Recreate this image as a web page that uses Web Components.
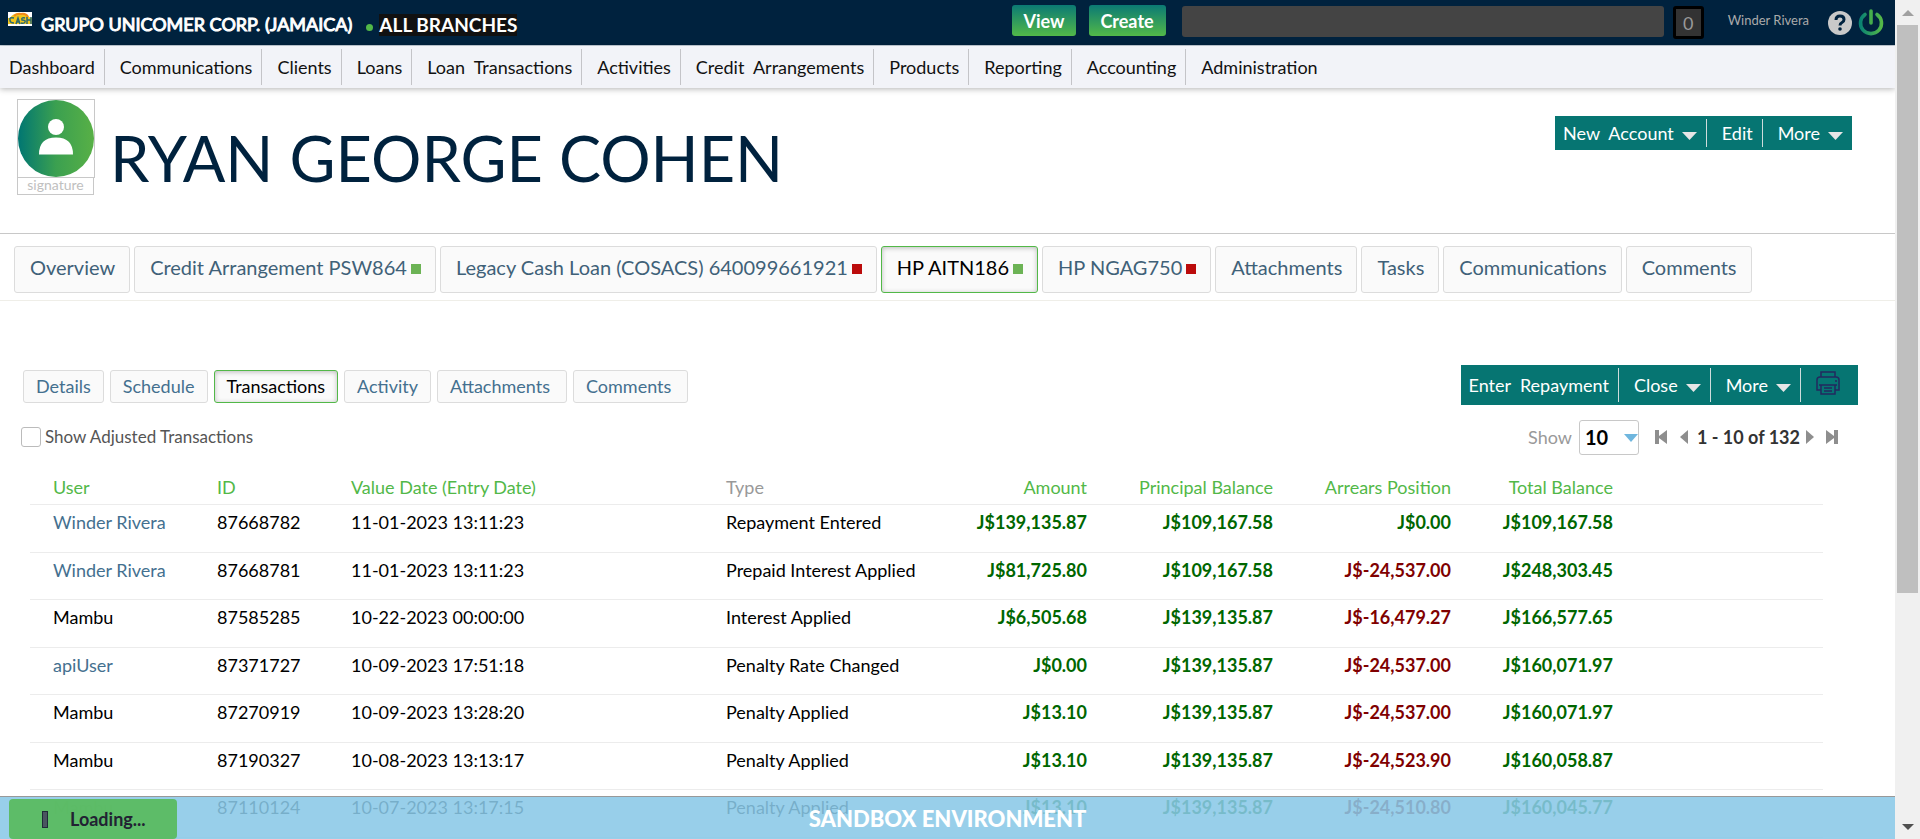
<!DOCTYPE html>
<html lang="en">
<head>
<meta charset="utf-8">
<title>Ryan George Cohen - HP AITN186</title>
<style>
html, body { margin: 0; height: 100%; }
body { font: 18px/22px Lato, "Liberation Sans", sans-serif; color: #000; background: #fff; overflow: hidden; }
</style>
</head>
<body>
<app-shell>
  <top-bar></top-bar>
  <main-nav></main-nav>
  <client-header name="RYAN GEORGE COHEN">
    <action-bar slot="actions">
      <action-item menu>New&nbsp; Account</action-item>
      <action-item>Edit</action-item>
      <action-item menu>More</action-item>
    </action-bar>
  </client-header>
  <tab-strip size="large">
    <tab-item>Overview</tab-item>
    <tab-item state="green">Credit Arrangement PSW864</tab-item>
    <tab-item state="red">Legacy Cash Loan (COSACS) 640099661921</tab-item>
    <tab-item state="green" active>HP AITN186</tab-item>
    <tab-item state="red">HP NGAG750</tab-item>
    <tab-item>Attachments</tab-item>
    <tab-item>Tasks</tab-item>
    <tab-item>Communications</tab-item>
    <tab-item>Comments</tab-item>
  </tab-strip>
  <account-panel>
    <tab-strip slot="tabs">
      <tab-item>Details</tab-item>
      <tab-item>Schedule</tab-item>
      <tab-item active>Transactions</tab-item>
      <tab-item>Activity</tab-item>
      <tab-item roomy>Attachments</tab-item>
      <tab-item roomy>Comments</tab-item>
    </tab-strip>
    <action-bar slot="actions" tall>
      <action-item>Enter&nbsp; Repayment</action-item>
      <action-item menu>Close</action-item>
      <action-item menu>More</action-item>
      <action-item icon="print"></action-item>
    </action-bar>
    <list-controls></list-controls>
    <transactions-table></transactions-table>
  </account-panel>
  <sandbox-banner slot="overlay"></sandbox-banner>
</app-shell>

<script>
function define(name, html, setup) {
  const tpl = document.createElement('template');
  tpl.innerHTML = html;
  customElements.define(name, class extends HTMLElement {
    connectedCallback() {
      if (this.shadowRoot) return;
      const root = this.attachShadow({ mode: 'open' });
      root.append(tpl.content.cloneNode(true));
      if (setup) setup(this, root);
    }
  });
}

define('scroll-rail', `
<style>
  :host { display: flex; flex-direction: column; align-items: center; width: 25px; box-sizing: border-box; background: #f0f0f0; }
  .arrow { display: flex; flex: none; align-items: center; justify-content: center; width: 25px; height: 25px; }
  .track { flex: 1; width: 21px; }
  .thumb { height: 72%; background: #bfbfbf; }
</style>
<div class="arrow"><svg width="12" height="8"><path d="M0 7L6 1L12 7Z" fill="#a0a0a0"/></svg></div>
<div class="track"><div class="thumb"></div></div>
<div class="arrow"><svg width="12" height="8"><path d="M0 1L6 7L12 1Z" fill="#505050"/></svg></div>`);

define('app-shell', `
<style>
  :host { display: flex; height: 100vh; overflow: hidden; }
  .page { position: relative; flex: 1; min-width: 0; overflow: hidden; }
  slot[name=overlay]::slotted(*) { position: absolute; left: 0; right: 0; bottom: 0; }
</style>
<div class="page"><slot></slot><slot name="overlay"></slot></div>
<scroll-rail></scroll-rail>`);

define('top-bar', `
<style>
  :host { display: flex; align-items: flex-start; height: 46px; padding: 0 11px 0 8px; background: #00223e; color: #fff; border-bottom: 1px solid #c9d3dd; box-sizing: border-box; }
  .logo { margin-top: 12px; flex: none; }
  .org { margin: 13px 0 0 9px; -webkit-text-stroke: 1px #fff; white-space: nowrap; }
  .dot { width: 7px; height: 7px; margin: 24px 6px 0 14px; border-radius: 50%; background: #52b848; }
  .branch { margin-top: 14px; background: #111; font-size: 19px; line-height: 22px; font-weight: 700; white-space: nowrap; }
  .right { display: flex; align-items: flex-start; margin-left: auto; }
  button { font: 700 18px/22px Lato, sans-serif; color: #fff; border: 0; cursor: pointer; }
  .cta { height: 31px; margin: 5px 13px 0 0; padding: 0 12px 0 11px; border-radius: 3px; background: linear-gradient(#0b7a74, #52b848); }
  .cta + .cta { margin-right: 16px; }
  input { width: 482px; height: 31px; margin: 6px 9px 0 0; padding: 0 8px; box-sizing: border-box; border: 0; border-radius: 3px; background: #444; color: #fff; font: inherit; }
  .count { width: 31px; height: 33px; margin-top: 6px; box-sizing: border-box; border: 3px solid #000; border-radius: 3px; background: #333; color: #999; text-align: center; line-height: 29px; }
  .user { margin: 9px 19px 0 24px; font-size: 13px; color: #aaa; text-decoration: none; }
  .icon { display: block; padding: 0; background: none; }
  .help { margin-top: 11px; }
  .power { margin: 9px 0 0 6px; }
</style>
<svg class="logo" width="24" height="14" viewBox="0 0 24 14" role="img" aria-label="Courts Ready Cash">
  <rect width="24" height="14" fill="#fff"/>
  <path d="M2 6Q5 1 12 1Q19 1 21 5L24 6V12H0V6Z" fill="#f2c61c"/>
  <path d="M6 4Q9 1 13 2Q18 1 20 5" fill="none" stroke="#f08a1c" stroke-width="2"/>
  <g fill="none" stroke="#2b6a70" stroke-width="1.500"><path d="M6 6Q1 5 2 8Q2 11 6 11"/><path d="M8 12L10 6L12 12M9 10H12"/><path d="M17 6Q13 5 14 8Q18 8 17 10Q16 12 13 11"/><path d="M19 5V12M23 5V12M19 8H23"/></g>
</svg>
<div class="org">GRUPO UNICOMER CORP. (JAMAICA)</div>
<span class="dot"></span>
<div class="branch">ALL BRANCHES</div>
<div class="right">
  <button class="cta">View</button><button class="cta">Create</button>
  <input type="search" aria-label="Search">
  <div class="count">0</div>
  <a class="user" href="#user">Winder Rivera</a>
  <button class="icon help" aria-label="Help"><svg width="24" height="24" viewBox="0 0 24 24" style="display:block"><circle cx="12" cy="12" r="12" fill="#c9c9c9"/><path d="M8 9Q8 5 12 5Q16 5 16 8.500Q16 10.500 14 11.500Q12 12.500 12 14.500" fill="none" stroke="#00223e" stroke-width="3"/><circle cx="12" cy="18" r="1.800" fill="#00223e"/></svg></button>
  <button class="icon power" aria-label="Log out"><svg width="26" height="27" viewBox="0 0 26 27" style="display:block"><defs><linearGradient id="g"><stop stop-color="#0a8372"/><stop offset="1" stop-color="#55b848"/></linearGradient></defs><path d="M7 5.500A10.500 10.500 0 1 0 19 5.500" fill="none" stroke="url(#g)" stroke-width="3.600" stroke-linecap="round"/><path d="M13 2V14" stroke="#45ae4c" stroke-width="3.600" stroke-linecap="round"/></svg></button>
</div>`);

define('main-nav', `
<style>
  :host { display: block; position: relative; background: #f2f3f8; box-shadow: 0 1px 6px rgba(0,0,0,.3); }
  nav { display: flex; height: 42px; padding-top: 3px; box-sizing: border-box; }
  a { height: 36px; padding: 0 9px 0 15px; border-right: 1px solid #c4c4c8; color: #111; text-decoration: none; line-height: 37px; white-space: nowrap; }
  a:first-child { padding-left: 9px; }
  a:last-child { border: 0; }
</style>
<nav aria-label="Main">
  <a href="#1">Dashboard</a><a href="#2">Communications</a><a href="#3">Clients</a><a href="#4">Loans</a><a href="#5">Loan&nbsp; Transactions</a><a href="#6">Activities</a><a href="#7">Credit&nbsp; Arrangements</a><a href="#8">Products</a><a href="#9">Reporting</a><a href="#10">Accounting</a><a href="#11">Administration</a>
</nav>`);

define('client-header', `
<style>
  :host { display: flex; align-items: flex-start; height: 146px; padding: 11px 43px 0 17px; box-sizing: border-box; border-bottom: 1px solid #c8c8c8; }
  figure { margin: 0; width: 78px; flex: none; }
  svg { display: block; border: 1px solid #c8c8c8; }
  figcaption { width: 77px; height: 18px; margin-top: -1px; box-sizing: border-box; border: 1px solid #c8c8c8; color: #c0c0c0; font-size: 14px; line-height: 14px; text-align: center; }
  h1 { margin: 21px 0 0 15px; font-size: 63px; line-height: 76px; font-weight: 400; color: #00223e; white-space: nowrap; }
  slot { display: block; margin: 17px 0 0 auto; }
</style>
<figure>
  <svg width="76" height="77" viewBox="0 0 76 77" role="img" aria-label="Client photo"><defs><linearGradient id="a"><stop stop-color="#007672"/><stop offset=".5" stop-color="#3ba050"/><stop offset="1" stop-color="#58b046"/></linearGradient></defs><ellipse cx="38" cy="38.500" rx="38" ry="38.500" fill="url(#a)"/><circle cx="38" cy="27" r="8" fill="#fff"/><path d="M21 54.500Q21 37.500 38 37.500Q55 37.500 55 54.500Z" fill="#fff"/></svg>
  <figcaption>signature</figcaption>
</figure>
<h1></h1>
<slot name="actions"></slot>`, (el, root) => { root.querySelector('h1').textContent = el.getAttribute('name'); });

define('action-bar', `
<style>
  :host { display: flex; height: 34px; padding: 3px 0; box-sizing: border-box; background: #067572; color: #fff; }
  :host([tall]) { height: 40px; }
</style>
<slot></slot>`);

define('action-item', `
<style>
  :host { display: flex; }
  button { display: flex; align-items: center; gap: 8px; padding: 0 9px 0 15px; border: 0; background: none; color: inherit; font: inherit; white-space: nowrap; cursor: pointer; }
  :host(:first-child) button { padding-left: 8px; }
  :host(:not(:last-child)) button { border-right: 1px solid #cfdcdc; }
  .caret { display: none; margin-top: 6px; }
  :host([menu]) .caret { display: block; }
  .print { display: none; margin-bottom: 4px; }
  :host([icon=print]) button { padding: 0 18px 0 15px; }
  :host([icon=print]) .print { display: block; }
  :host([icon=print]) slot { display: none; }
</style>
<button><slot></slot><svg class="caret" width="15" height="8"><path d="M0 0H15L7.500 8Z" fill="#e6e6e6"/></svg><svg class="print" width="24" height="24" viewBox="0 0 24 24" fill="none" stroke="#23295f" stroke-width="1.500"><path d="M5 6V1H19V6M5 19H1V9Q1 6 4 6H20Q23 6 23 9V19H19M3 14H21M5 14V23H19V14M8 17H16M8 20H16M19 10H21"/></svg></button>`,
(el, root) => { if (el.getAttribute('icon') === 'print') root.querySelector('button').setAttribute('aria-label', 'Print'); });

define('tab-strip', `
<style>
  :host { display: flex; gap: 6px; }
  :host([size=large]) { gap: 4px; padding: 12px 14px 7px; border-bottom: 1px solid #efeee8; --tab-size: 20px; --tab-height: 47px; --tab-pad: 0 14px 6px 15px; --tab-color: #3f6178; }
</style>
<slot></slot>`);

define('tab-item', `
<style>
  :host { display: flex; }
  a { display: flex; align-items: center; gap: 4px; height: var(--tab-height, 33px); padding: var(--tab-pad, 0 12px 2px); box-sizing: border-box; border: 1px solid #dcdcdc; border-radius: 3px; background: #fafafa; color: var(--tab-color, #44708f); font-size: var(--tab-size, 18px); line-height: 24px; text-decoration: none; white-space: nowrap; }
  :host([roomy]) a { padding: 0 16px 2px 12px; }
  :host([active]) a { border-color: #52b848; color: #000; box-shadow: inset 0 1px 5px rgba(0,0,0,.25); }
  i { display: none; width: 10px; height: 10px; margin-top: 5px; background: #6cb355; }
  :host([state]) i { display: block; }
  :host([state=red]) i { background: #bb0b0b; }
</style>
<a href="#tab"><slot></slot><i></i></a>`);

define('account-panel', `
<style>
  :host { display: block; padding-top: 64px; }
  .bar { display: flex; justify-content: space-between; align-items: flex-start; padding: 0 37px 0 23px; }
  slot[name=tabs] { display: block; padding-top: 5px; }
</style>
<div class="bar"><slot name="tabs"></slot><slot name="actions"></slot></div>
<slot></slot>`);

define('list-controls', `
<style>
  :host { display: flex; justify-content: space-between; align-items: center; height: 36px; margin-top: 14px; padding: 0 57px 0 21px; }
  label { display: flex; align-items: center; }
  .adjusted { gap: 4px; font-size: 17px; color: #555; }
  input { appearance: none; width: 20px; height: 20px; margin: 0; box-sizing: border-box; border: 1px solid #bbb; border-radius: 3px; background: #fff; }
  .pager, .size { display: flex; align-items: center; color: #999; }
  .select { position: relative; display: block; margin: 0 16px 0 7px; }
  .select svg { position: absolute; right: 1px; top: 14px; pointer-events: none; }
  select { display: block; appearance: none; width: 60px; height: 35px; padding: 0 0 0 5px; border: 1px solid #c8c8c8; border-radius: 3px; background: #fff; color: #000; font: 700 20px/24px Lato, sans-serif; }
  button { display: block; padding: 0; border: 0; background: none; color: #8e8e8e; }
  button svg { display: block; }
  b { margin: 0 6px 0 9px; color: #333; }
  .prev { margin-left: 13px; }
  .last { margin-left: 12px; }
</style>
<label class="adjusted"><input type="checkbox">Show Adjusted Transactions</label>
<div class="pager">
  <label class="size">Show<span class="select"><select><option>10</option></select><svg width="14" height="8"><path d="M0 0H14L7 8Z" fill="#6fb6de"/></svg></span></label>
  <button aria-label="First page"><svg width="12" height="14"><path d="M0 0H4V6L12 0V14L4 8V14H0Z" fill="currentColor"/></svg></button>
  <button class="prev" aria-label="Previous page"><svg width="8" height="14"><path d="M8 0V14L0 7Z" fill="currentColor"/></svg></button>
  <b>1 - 10 of 132</b>
  <button aria-label="Next page"><svg width="8" height="14"><path d="M0 0V14L8 7Z" fill="currentColor"/></svg></button>
  <button class="last" aria-label="Last page"><svg width="12" height="14"><path d="M12 0H8V6L0 0V14L8 8V14H12Z" fill="currentColor"/></svg></button>
</div>`);

const ROWS = [
  ['Winder Rivera', '87668782', '11-01-2023 13:11:23', 'Repayment Entered', '139,135.87', '109,167.58', '0.00', '109,167.58'],
  ['Winder Rivera', '87668781', '11-01-2023 13:11:23', 'Prepaid Interest Applied', '81,725.80', '109,167.58', '-24,537.00', '248,303.45'],
  ['Mambu', '87585285', '10-22-2023 00:00:00', 'Interest Applied', '6,505.68', '139,135.87', '-16,479.27', '166,577.65'],
  ['apiUser', '87371727', '10-09-2023 17:51:18', 'Penalty Rate Changed', '0.00', '139,135.87', '-24,537.00', '160,071.97'],
  ['Mambu', '87270919', '10-09-2023 13:28:20', 'Penalty Applied', '13.10', '139,135.87', '-24,537.00', '160,071.97'],
  ['Mambu', '87190327', '10-08-2023 13:13:17', 'Penalty Applied', '13.10', '139,135.87', '-24,523.90', '160,058.87'],
  ['Mambu', '87110124', '10-07-2023 13:17:15', 'Penalty Applied', '13.10', '139,135.87', '-24,510.80', '160,045.77']
];

define('transactions-table', `
<style>
  :host { display: block; padding: 16px 72px 0 30px; }
  table { width: 100%; table-layout: fixed; border-collapse: separate; border-spacing: 0; }
  th, td { padding: 0 23px; border-bottom: 1px solid #ececec; text-align: left; vertical-align: top; white-space: nowrap; box-sizing: border-box; }
  th { height: 34px; padding-bottom: 2px; vertical-align: middle; font-weight: 400; color: #52b848; }
  th.plain { color: #999; }
  td { height: 48px; padding-top: 6px; }
  tr:nth-child(even) td { height: 47px; }
  .n { text-align: right; }
  td.n { color: #060; font-weight: 700; }
  td.neg { color: #800000; }
  a { color: #44708f; text-decoration: none; }
</style>
<table>
  <colgroup><col style="width:164px"><col style="width:134px"><col><col style="width:250px"><col style="width:157px"><col style="width:186px"><col style="width:178px"><col style="width:162px"><col style="width:187px"></colgroup>
  <thead><tr><th>User</th><th>ID</th><th>Value Date (Entry Date)</th><th class="plain">Type</th><th class="n">Amount</th><th class="n">Principal Balance</th><th class="n">Arrears Position</th><th class="n">Total Balance</th><th></th></tr></thead>
  <tbody></tbody>
</table>`, (el, root) => {
  root.querySelector('tbody').innerHTML = ROWS.map(r => '<tr>' + r.map((v, i) => {
    if (i === 0) return '<td>' + (v === 'Mambu' ? v : '<a href="#user">' + v + '</a>') + '</td>';
    if (i < 4) return '<td>' + v + '</td>';
    return '<td class="n' + (v[0] === '-' ? ' neg' : '') + '">J$' + v + '</td>';
  }).join('') + '<td></td></tr>').join('');
});

define('sandbox-banner', `
<style>
  :host { display: flex; justify-content: center; height: 43px; box-sizing: border-box; border-top: 1px solid #999; background: rgba(137,200,231,.87); color: #fff; }
  strong { font-size: 22px; line-height: 26px; padding-top: 9px; font-weight: 900; }
  .loading { position: absolute; left: 9px; bottom: 0; display: flex; align-items: center; gap: 22px; width: 168px; height: 40px; padding-left: 33px; box-sizing: border-box; border-radius: 4px; background: rgba(91,187,98,.96); color: #223; }
  .loading b { font-weight: 700; }
  i { width: 6px; height: 17px; box-sizing: border-box; border: 1px solid #1f2c38; background: #4a5560; }
</style>
<strong>SANDBOX ENVIRONMENT</strong>
<div class="loading" role="status"><i></i><b>Loading...</b></div>`);
</script>
</body>
</html>
